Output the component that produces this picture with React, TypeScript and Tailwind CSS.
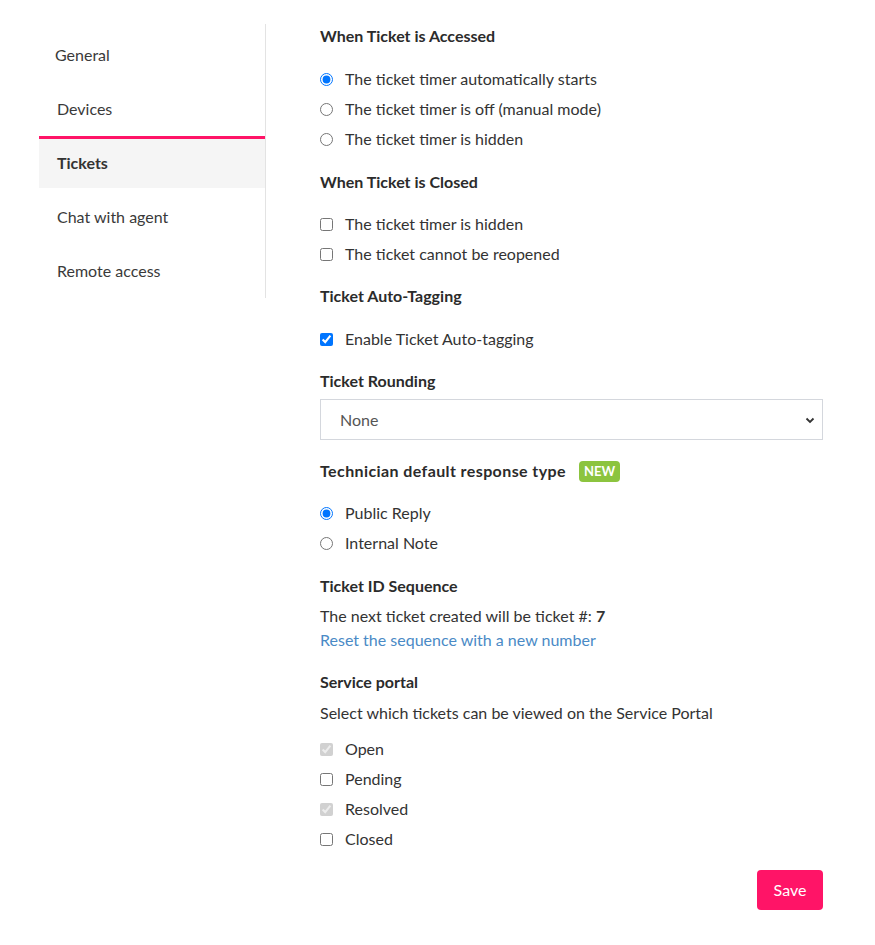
import React from "react";

const font = { fontFamily: "Lato, 'Liberation Sans', sans-serif" };

function Radio({ label, checked }: { label: string; checked?: boolean }) {
  return (
    <label className="flex items-center h-[30px] gap-3 text-[16px] text-[#333]">
      <input type="radio" defaultChecked={checked} name={label} className="m-0 w-[13px] h-[13px]" />
      <span>{label}</span>
    </label>
  );
}

function Check({ label, checked, disabled }: { label: string; checked?: boolean; disabled?: boolean }) {
  return (
    <label className="flex items-center h-[30px] gap-3 text-[16px] text-[#333]">
      <input type="checkbox" defaultChecked={checked} disabled={disabled} className="m-0 w-[13px] h-[13px]" />
      <span>{label}</span>
    </label>
  );
}

function Heading({ children, className = "" }: { children: React.ReactNode; className?: string }) {
  return <h3 className={"h-6 leading-6 text-[16px] font-bold text-[#2b2b2b] " + className}>{children}</h3>;
}

export default function App() {
  const items = ["General", "Devices", "Tickets", "Chat with agent", "Remote access"];
  return (
    <div className="min-h-[945px] bg-white" style={font}>
      <div className="flex pl-[39px] pt-[24px]">
        <nav className="w-[227px] self-start border-r border-[#e3e3e3] pt-1">
          {items.map((it, i) => {
            const active = it === "Tickets";
            return (
              <div
                key={it}
                className={
                  "flex items-center h-[52px] pb-[2px] border-t-[3px] mb-[2px] text-[16px] " +
                  (active ? "border-[#ff1467] bg-[#f5f5f5] font-bold text-[#333] pl-[18px]" : "border-transparent text-[#3a3a3a] ") +
                  (!active && i === 0 ? "pl-[16px]" : !active ? "pl-[18px]" : "")
                }
              >
                {it}
              </div>
            );
          })}
        </nav>
        <main className="ml-[54px] w-[503px]">
          <Heading>When Ticket is Accessed</Heading>
          <div className="mt-4">
            <Radio label="The ticket timer automatically starts" checked />
            <Radio label="The ticket timer is off (manual mode)" />
            <Radio label="The ticket timer is hidden" />
          </div>

          <Heading className="mt-4">When Ticket is Closed</Heading>
          <div className="mt-[15px]">
            <Check label="The ticket timer is hidden" />
            <Check label="The ticket cannot be reopened" />
          </div>

          <Heading className="mt-[15px]">Ticket Auto-Tagging</Heading>
          <div className="mt-4">
            <Check label="Enable Ticket Auto-tagging" checked />
          </div>

          <Heading className="mt-[15px]">Ticket Rounding</Heading>
          <div className="mt-[6px] h-[41px] border border-[#d4d7dd] flex items-center justify-between pl-[19px] pr-[5px] text-[16px] text-[#555]">
            <span>None</span>
            <svg width="12" height="12" viewBox="0 0 12 12" className="mr-[1px]">
              <path d="M2.5 4.5 L6 8 L9.5 4.5" fill="none" stroke="#333" strokeWidth="1.8" />
            </svg>
          </div>

          <div className="mt-[19px] flex items-center h-6">
            <Heading className="tracking-[0.4px]">Technician default response type</Heading>
            <span className="ml-[13px] h-[21px] px-[5px] rounded-[4px] bg-[#8cc43f] text-white text-[13px] font-bold leading-[21px]">NEW</span>
          </div>
          <div className="mt-[15px]">
            <Radio label="Public Reply" checked />
            <Radio label="Internal Note" />
          </div>

          <Heading className="mt-4">Ticket ID Sequence</Heading>
          <p className="mt-[6px] leading-6 text-[16px] text-[#333]">
            The next ticket created will be ticket #: <b>7</b>
          </p>
          <a className="block leading-6 text-[16px] text-[#4a8ac6]">Reset the sequence with a new number</a>

          <Heading className="mt-[18px]">Service portal</Heading>
          <p className="mt-[7px] leading-6 text-[16px] text-[#333]">Select which tickets can be viewed on the Service Portal</p>
          <div className="mt-[9px]">
            <Check label="Open" checked disabled />
            <Check label="Pending" />
            <Check label="Resolved" checked disabled />
            <Check label="Closed" />
          </div>

          <div className="mt-4 flex justify-end">
            <button className="h-10 w-[66px] rounded-[4px] bg-[#ff1467] text-white text-[16px]">Save</button>
          </div>
        </main>
      </div>
    </div>
  );
}
